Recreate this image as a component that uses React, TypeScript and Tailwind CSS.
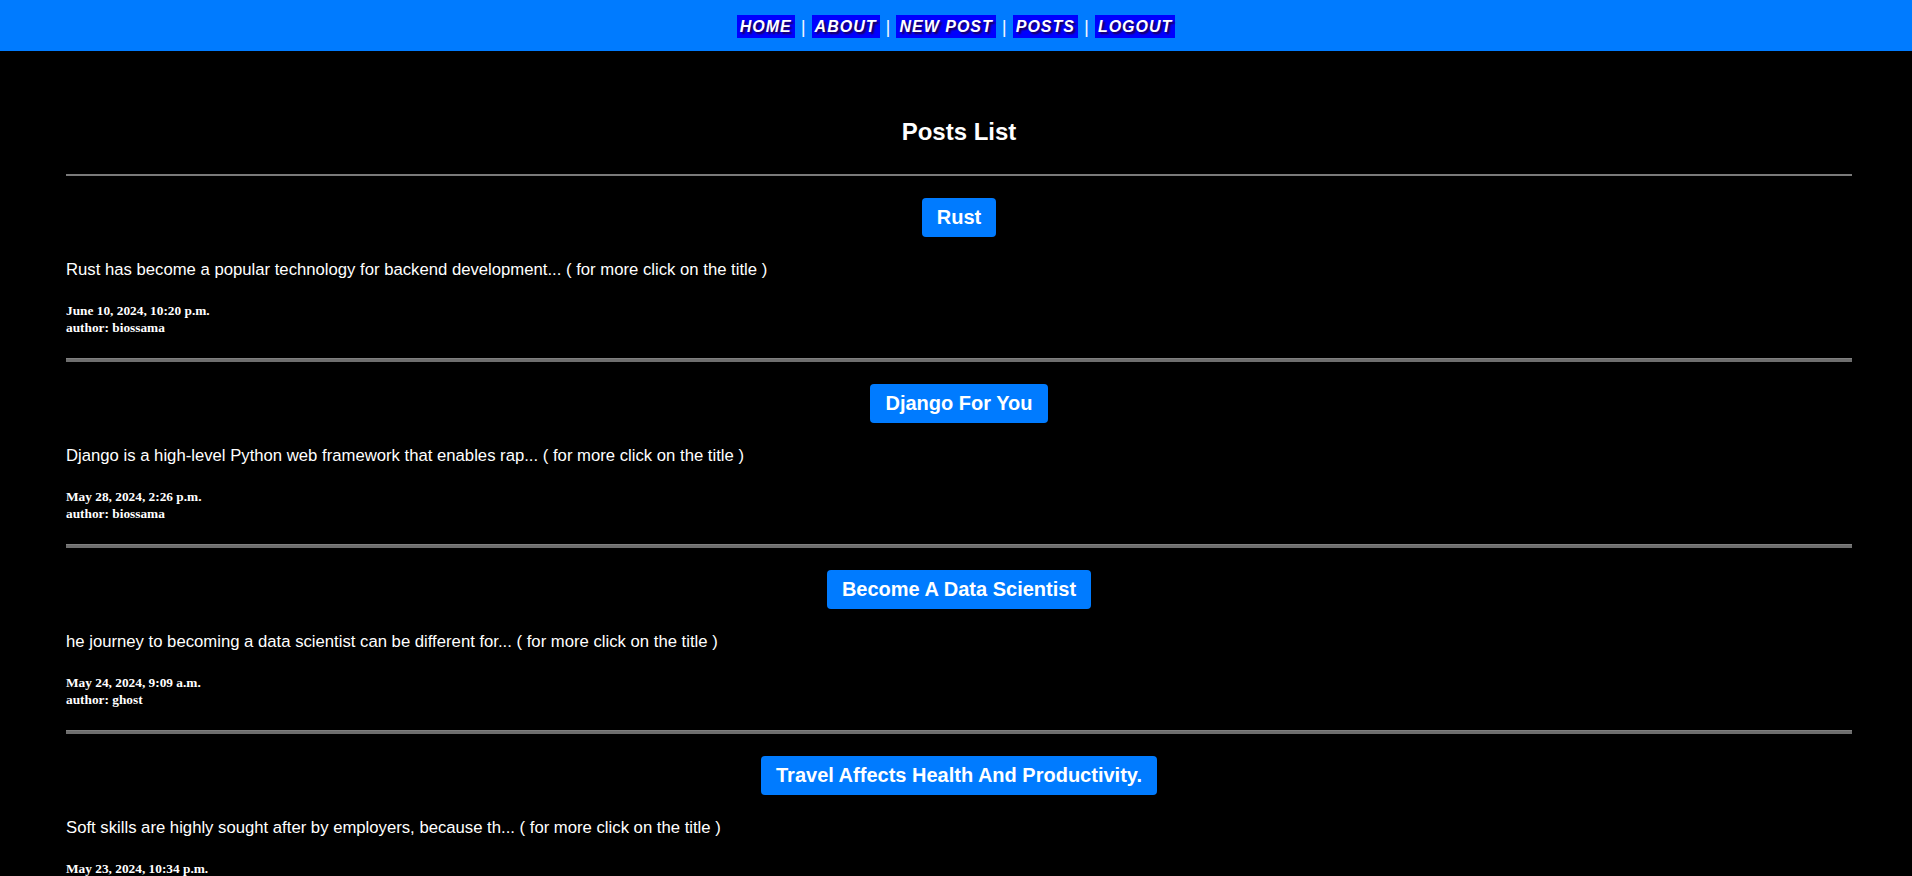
import React from "react";

const posts = [
  {
    title: "Rust",
    body: "Rust has become a popular technology for backend development... ( for more click on the title )",
    date: "June 10, 2024, 10:20 p.m.",
    author: "biossama",
  },
  {
    title: "Django For You",
    body: "Django is a high-level Python web framework that enables rap... ( for more click on the title )",
    date: "May 28, 2024, 2:26 p.m.",
    author: "biossama",
  },
  {
    title: "Become A Data Scientist",
    body: "he journey to becoming a data scientist can be different for... ( for more click on the title )",
    date: "May 24, 2024, 9:09 a.m.",
    author: "ghost",
  },
  {
    title: "Travel Affects Health And Productivity.",
    body: "Soft skills are highly sought after by employers, because th... ( for more click on the title )",
    date: "May 23, 2024, 10:34 p.m.",
    author: "biossama",
  },
];

const links = ["HOME", "ABOUT", "NEW POST", "POSTS", "LOGOUT"];

export default function App() {
  return (
    <div className="min-h-screen bg-black text-white font-['Liberation_Sans',Arial,sans-serif]">
      <nav className="h-[51px] bg-[#007bff] flex justify-center items-start pt-[15px]">
        {links.map((l, i) => (
          <React.Fragment key={l}>
            {i > 0 && (
              <span className="mx-[6px] text-[#eef4ff] text-[19px] leading-[23px]">|</span>
            )}
            <a className="bg-[#0000ff] text-white font-bold italic text-[16px] leading-[23px] h-[23px] px-[3px] tracking-[1px] [text-shadow:2px_2px_2px_#220044]">
              {l}
            </a>
          </React.Fragment>
        ))}
      </nav>
      <main className="pl-[66px] pr-[60px]">
        <h1 className="text-center font-bold text-[24px] leading-[28px] pt-[67px] pb-[28px]">
          Posts List
        </h1>
        <div className="h-[2px] bg-[#7a7a7a]" />
        {posts.map((p) => (
          <div key={p.title}>
            <div className="pt-[22px] flex justify-center">
              <a className="bg-[#007bff] rounded-[4px] text-white font-bold text-[20px] leading-[23px] px-[15px] py-[8px]">
                {p.title}
              </a>
            </div>
            <p className="mt-[24px] text-[16.7px] leading-[18px]">{p.body}</p>
            <div className="mt-[24px] mb-[22px] font-['Liberation_Serif','Times_New_Roman',serif] font-bold text-[13.33px] leading-[16.5px]">
              <div>{p.date}</div>
              <div>author: {p.author}</div>
            </div>
            <div className="h-[4px] bg-[#6e6e6e] border-t border-[#808080]" />
          </div>
        ))}
      </main>
    </div>
  );
}
